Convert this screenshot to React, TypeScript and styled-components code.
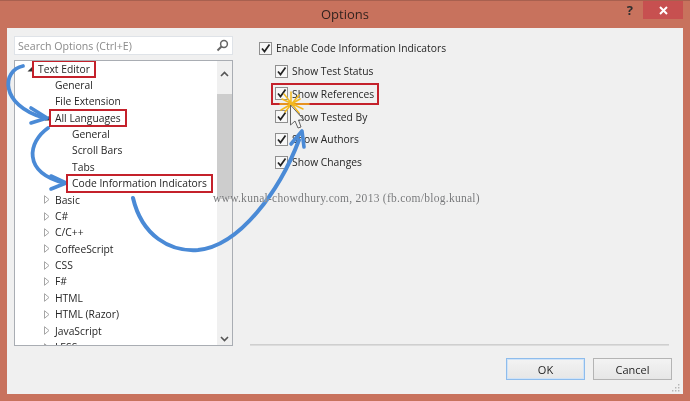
import React from "react";
import styled, { createGlobalStyle } from "styled-components";

const Global = createGlobalStyle`
  html, body { margin: 0; padding: 0; background: #c8725d; }
  #root { width: 690px; height: 401px; overflow: hidden; }
`;

const Window = styled.div`
  position: relative;
  width: 690px;
  height: 401px;
  box-sizing: border-box;
  display: flex;
  flex-direction: column;
  background: #c8725d;
  border-top: 1px solid #a8604f;
  font-family: "Open Sans", "Noto Sans", sans-serif;
  font-size: 10.3px;
  color: #262626;
  filter: blur(0.35px);
`;

const TitleBar = styled.div`
  position: relative;
  height: 27px;
  flex: none;
  display: flex;
  align-items: center;
  justify-content: center;
`;

const Title = styled.div`
  font-size: 13px;
  color: #33231f;
  margin-top: -1px;
`;

const TitleButtons = styled.div`
  position: absolute;
  top: 0;
  right: 7px;
  display: flex;
  align-items: flex-start;
`;

const Help = styled.span`
  font-size: 13px;
  font-weight: 700;
  line-height: 19px;
  color: #2f2f2f;
  margin-right: 10px;
`;

const Close = styled.div`
  width: 40px;
  height: 18px;
  background: #c75050;
  display: flex;
  align-items: center;
  justify-content: center;
`;

const Panel = styled.div`
  flex: 1;
  margin: 0 7px 7px;
  background: #f0f0f0;
  box-sizing: border-box;
  padding: 8px 11px 0 7px;
  display: grid;
  grid-template-columns: 219px 1fr;
  grid-template-rows: 310px 1fr;
  column-gap: 17px;
  position: relative;
`;

const Left = styled.div`
  display: flex;
  flex-direction: column;
  gap: 5px;
`;

const Search = styled.div`
  height: 19px;
  box-sizing: border-box;
  background: #fff;
  border: 1px solid #dfe3e8;
  display: flex;
  align-items: center;
  justify-content: space-between;
  padding: 0 3px;
  color: #8a8a8a;
  font-size: 10.6px;
`;

const TreeBox = styled.div`
  height: 286px;
  box-sizing: border-box;
  background: #fff;
  border: 1px solid #a9adb3;
  display: flex;
  overflow: hidden;
`;

const Tree = styled.div`
  flex: 1;
  margin-top: -0.5px;
  min-width: 0;
`;

const Row = styled.div<{ $depth: number }>`
  height: 16.38px;
  line-height: 16.38px;
  padding-left: ${(p) => p.$depth}px;
  display: flex;
  align-items: center;
  white-space: nowrap;
`;

const Expander = styled.span`
  width: 11px;
  margin-left: -11px;
  display: flex;
  align-items: center;
`;

const Marked = styled.span`
  outline: 2px solid #c4212b;
  outline-offset: -1px;
  padding: 0 5px;
  margin-left: -5px;
  position: relative;
  z-index: 1;
`;

const Scrollbar = styled.div`
  width: 15px;
  flex: none;
  background: #f0f0f0;
  display: flex;
  flex-direction: column;
  align-items: center;
`;

const ScrollCap = styled.div`
  height: 33px;
  flex: none;
  display: flex;
  align-items: center;
  padding-bottom: 8px;
  box-sizing: border-box;
`;

const Thumb = styled.div`
  width: 15px;
  height: 105px;
  flex: none;
  background: #cdcdcd;
`;

const ScrollEnd = styled.div`
  margin-top: auto;
  padding-bottom: 3px;
  display: flex;
`;

const Options = styled.div`
  padding: 1px 0 0 9px;
  display: flex;
  flex-direction: column;
`;

const Check = styled.div<{ $nested?: boolean; $mark?: boolean }>`
  height: 22.75px;
  display: flex;
  align-items: center;
  gap: 4px;
  margin-left: ${(p) => (p.$nested ? 16 : 0)}px;
  white-space: nowrap;
  width: fit-content;
  ${(p) =>
    p.$mark
      ? "outline: 2px solid #c4212b; outline-offset: -2px; margin-left: 12px; padding: 0 4px; width: 108px; box-sizing: border-box;"
      : ""}
`;

const Box = styled.span`
  width: 13px;
  height: 13px;
  box-sizing: border-box;
  background: #f7f7f7;
  border: 1px solid #8f8f8f;
  display: flex;
  flex: none;
`;

const Footer = styled.div`
  grid-column: 2;
  display: flex;
  flex-direction: column;
  align-items: flex-end;
`;

const Rule = styled.div`
  width: 419px;
  height: 1px;
  margin-right: 3px;
  background: #cfcfcf;
  border-bottom: 1px solid #dcdcdc;
  margin-top: -2px;
`;

const Buttons = styled.div`
  display: flex;
  gap: 8px;
  margin-top: 12px;
`;

const Button = styled.div<{ $primary?: boolean }>`
  width: 79px;
  height: 22px;
  box-sizing: border-box;
  border: 1px solid ${(p) => (p.$primary ? "#8ebcec" : "#b4b4b4")};
  outline: ${(p) => (p.$primary ? "1px solid #cfe3f8" : "none")};
  outline-offset: -2px;
  background: linear-gradient(#f3f3f3, #e6e6e6);
  display: flex;
  align-items: center;
  justify-content: center;
  font-size: 11px;
`;

const Grip = styled.svg`
  position: absolute;
  right: 3px;
  bottom: 2px;
`;

const Overlay = styled.svg`
  position: absolute;
  left: 0;
  top: -1px;
  pointer-events: none;
`;

const Watermark = styled.div`
  position: absolute;
  left: 213px;
  top: 191px;
  font-family: "Liberation Serif", serif;
  font-size: 11.5px;
  letter-spacing: 0.27px;
  white-space: nowrap;
  color: #77787a;
  text-shadow: 0 0 1px #fff;
`;

const Tick = () => (
  <svg width="11" height="11" viewBox="0 0 11 11">
    <path d="M2 5.5 L4.5 8.5 L9.5 1.5" fill="none" stroke="#222" strokeWidth="1.7" />
  </svg>
);

const Open = () => (
  <svg width="6" height="6" viewBox="0 0 6 6">
    <path d="M5.5 0.5 V5.5 H0.5 Z" fill="#333" />
  </svg>
);

const Closed = () => (
  <svg width="6" height="9" viewBox="0 0 6 9">
    <path d="M0.5 0.7 L5 4.5 L0.5 8.3 Z" fill="#fff" stroke="#a6a6a6" />
  </svg>
);

const langs = ["Basic", "C#", "C/C++", "CoffeeScript", "CSS", "F#", "HTML", "HTML (Razor)", "JavaScript", "LESS"];
const checks = ["Show Test Status", "Show References", "Show Tested By", "Show Authors", "Show Changes"];

export default function App() {
  return (
    <Window>
      <Global />
      <TitleBar>
        <Title>Options</Title>
        <TitleButtons>
          <Help>?</Help>
          <Close>
            <svg width="9" height="9" viewBox="0 0 9 9">
              <path d="M1 1 L8 8 M8 1 L1 8" stroke="#fff" strokeWidth="2" />
            </svg>
          </Close>
        </TitleButtons>
      </TitleBar>
      <Panel>
        <Left>
          <Search>
            <span>Search Options (Ctrl+E)</span>
            <svg width="13" height="13" viewBox="0 0 13 13">
              <circle cx="8" cy="5" r="3.4" fill="none" stroke="#666" strokeWidth="1.5" />
              <path d="M5.5 7.5 L1.5 11.5" stroke="#666" strokeWidth="2" />
            </svg>
          </Search>
          <TreeBox>
            <Tree>
              <Row $depth={23}>
                <Expander><Open /></Expander>
                <Marked>Text Editor</Marked>
              </Row>
              <Row $depth={40}>General</Row>
              <Row $depth={40}>File Extension</Row>
              <Row $depth={40}>
                <Expander><Open /></Expander>
                <Marked>All Languages</Marked>
              </Row>
              <Row $depth={57}>General</Row>
              <Row $depth={57}>Scroll Bars</Row>
              <Row $depth={57}>Tabs</Row>
              <Row $depth={57}>
                <Marked>Code Information Indicators</Marked>
              </Row>
              {langs.map((l) => (
                <Row key={l} $depth={40}>
                  <Expander><Closed /></Expander>
                  {l}
                </Row>
              ))}
            </Tree>
            <Scrollbar>
              <ScrollCap>
                <svg width="9" height="6" viewBox="0 0 9 6">
                  <path d="M1 5 L4.5 1.5 L8 5" fill="none" stroke="#555" strokeWidth="1.6" />
                </svg>
              </ScrollCap>
              <Thumb />
              <ScrollEnd>
                <svg width="9" height="6" viewBox="0 0 9 6">
                  <path d="M1 1 L4.5 4.5 L8 1" fill="none" stroke="#555" strokeWidth="1.6" />
                </svg>
              </ScrollEnd>
            </Scrollbar>
          </TreeBox>
        </Left>
        <Options>
          <Check>
            <Box><Tick /></Box>
            Enable Code Information Indicators
          </Check>
          {checks.map((c) => (
            <Check key={c} $nested $mark={c === "Show References"}>
              <Box><Tick /></Box>
              {c}
            </Check>
          ))}
        </Options>
        <Footer>
          <Rule />
          <Buttons>
            <Button $primary>OK</Button>
            <Button>Cancel</Button>
          </Buttons>
        </Footer>
        <Grip width="8" height="8" viewBox="0 0 8 8">
          <path d="M6 0h1.4v1.4H6zM6 3h1.4v1.4H6zM3 3h1.4v1.4H3zM6 6h1.4v1.4H6zM3 6h1.4v1.4H3zM0 6h1.4v1.4H0z" fill="#b5b5b5" />
        </Grip>
      </Panel>
      <Overlay width="690" height="401" viewBox="0 0 690 401">
        <g fill="none" stroke="#4a8ad6" strokeLinecap="round" strokeLinejoin="round">
          <path d="M23 66 C2 70 -1 105 44 118" strokeWidth="3.8" />
          <path d="M31 108 L47 118 L31 123" strokeWidth="3.6" />
          <path d="M48 128 C28 142 22 172 64 183" strokeWidth="3.8" />
          <path d="M51 176 L66 183 L51 189" strokeWidth="3.6" />
          <path d="M133 198 C142 236 170 252 198 250 C240 246 280 190 299 140" strokeWidth="4" />
          <path d="M291 144 L302 131 L304 147" strokeWidth="3.6" />
        </g>
        <g stroke="#f2b81f" strokeWidth="1.5" strokeLinecap="round">
          <path d="M280 104 H309 M284 94 L299 113 M299 95 L285 112 M291 92 V114 M282 99 L303 109 M281 110 L300 99" />
        </g>
        <path
          d="M290.5 105 V125 L295 121 L298 128 L301 127 L298.5 120 L304 120 Z"
          fill="#f4f4f4"
          stroke="#555"
          strokeWidth="0.9"
          strokeLinejoin="round"
        />
      </Overlay>
      <Watermark>www.kunal-chowdhury.com, 2013 (fb.com/blog.kunal)</Watermark>
    </Window>
  );
}
